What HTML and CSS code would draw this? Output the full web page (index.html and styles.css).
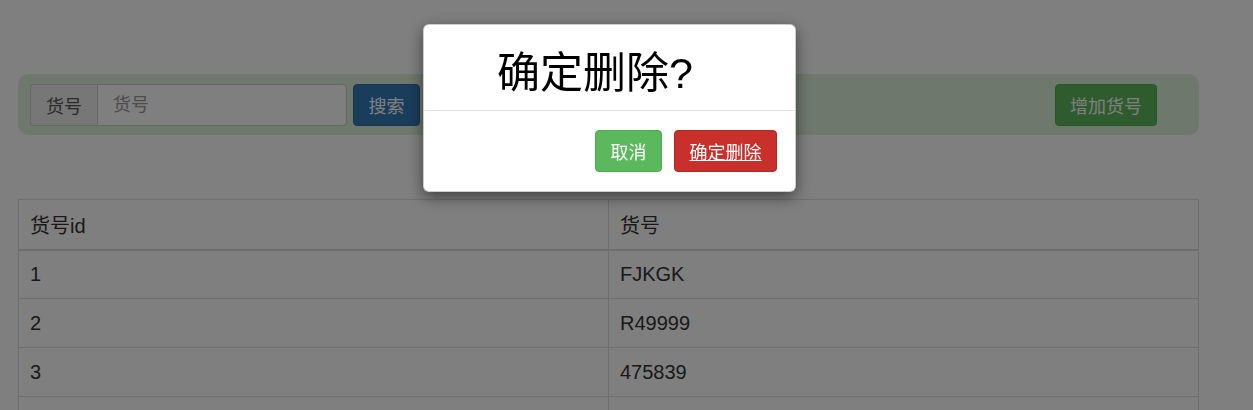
FILE: index.html
```html
<!DOCTYPE html>
<html lang="zh-CN">
<head>
<meta charset="utf-8">
<title>货号管理</title>
<link rel="stylesheet" href="styles.css">
</head>
<body>
<div class="page">
  <div class="toolbar">
    <div class="input-group">
      <span class="addon">货号</span>
      <input class="field" type="text" placeholder="货号">
    </div>
    <button class="btn btn-primary">搜索</button>
    <div class="input-group group-2">
      <span class="addon">货号id</span>
      <input class="field field-2" type="text" placeholder="货号id">
    </div>
    <button class="btn btn-primary">搜索</button>
    <span class="spacer"></span>
    <button class="btn btn-success">增加货号</button>
  </div>

  <table class="grid">
    <thead>
      <tr><th>货号id</th><th>货号</th></tr>
    </thead>
    <tbody>
      <tr><td>1</td><td>FJKGK</td></tr>
      <tr><td>2</td><td>R49999</td></tr>
      <tr><td>3</td><td>475839</td></tr>
      <tr><td></td><td></td></tr>
    </tbody>
  </table>
</div>

<div class="backdrop">
  <div class="modal">
    <div class="modal-header">
      <h1 class="modal-title">确定删除?</h1>
    </div>
    <div class="modal-footer">
      <button class="mbtn mbtn-cancel">取消</button>
      <a class="mbtn mbtn-danger" href="#">确定删除</a>
    </div>
  </div>
</div>
</body>
</html>
```
FILE: styles.css
```css
* { box-sizing: border-box; }
html, body { margin: 0; padding: 0; }
body {
  background: #fff;
  color: #333;
  font-family: "Liberation Sans", "Noto Sans CJK SC", sans-serif;
  font-size: 18px;
  overflow: hidden;
}
.page { padding: 74px 54px 0 18px; }

.toolbar {
  display: flex;
  align-items: center;
  background: #dff0d8;
  border-radius: 10px;
  padding: 10px 42px 9px 12px;
  height: 61px;
}
.input-group { display: flex; height: 42px; }
.addon {
  display: flex;
  align-items: center;
  padding: 0 15px;
  background: #eee;
  border: 1px solid #ccc;
  border-right: 0;
  border-radius: 4px 0 0 4px;
  color: #555;
  font-size: 18px;
}
.field {
  width: 250px;
  height: 42px;
  border: 1px solid #ccc;
  border-radius: 0 4px 4px 0;
  padding: 0 15px;
  font-family: inherit;
  font-size: 18px;
  color: #555;
  background: #fff;
}
.field::placeholder { color: #999; }
.field-2 { width: 204px; }
.group-2 { margin-left: 6px; }

.btn {
  height: 42px;
  padding: 0 14.5px;
  border: 1px solid transparent;
  border-radius: 4px;
  font-family: inherit;
  font-size: 18px;
  color: #fff;
  margin-left: 6px;
}
.btn-primary { background: #337ab7; border-color: #2e6da4; }
.btn-success { background: #5cb85c; border-color: #4cae4c; padding: 0 14px; }
.spacer { flex: 1; }

.grid {
  margin-top: 64px;
  width: 1181px;
  border-collapse: collapse;
  border: 1px solid #ddd;
  font-size: 20px;
}
.grid th, .grid td {
  text-align: left;
  font-weight: normal;
  border: 1px solid #ddd;
  padding: 0 11px;
  height: 49px;
  width: 50%;
}
.grid thead th { border-bottom: 2px solid #ddd; height: 50px; }

.backdrop {
  position: fixed;
  inset: 0;
  background: rgba(0, 0, 0, 0.5);
}
.modal {
  margin: 24px 0 0 423px;
  width: 373px;
  background: #fff;
  border: 1px solid rgba(0, 0, 0, 0.2);
  border-radius: 6px;
  box-shadow: 0 5px 15px rgba(0, 0, 0, 0.5);
}
.modal-header {
  height: 86px;
  border-bottom: 1px solid #e5e5e5;
  padding: 0 44px 0 15px;
  display: flex;
  align-items: center;
  justify-content: center;
}
.modal-title {
  margin: 0;
  font-size: 43px;
  font-weight: normal;
  line-height: 1.1;
  color: #000;
  padding-top: 12px;
}
.modal-footer {
  display: flex;
  justify-content: flex-end;
  gap: 12px;
  padding: 19px 18px 19px;
}
.mbtn {
  display: flex;
  align-items: center;
  height: 42px;
  padding: 0 14.5px;
  border: 1px solid transparent;
  border-radius: 4px;
  font-family: inherit;
  font-size: 18px;
  color: #fff;
  text-decoration: none;
}
.mbtn-cancel { background: #5cb85c; border-color: #4cae4c; }
.mbtn-danger { background: #c9302c; border-color: #ac2925; text-decoration: underline; }
```
